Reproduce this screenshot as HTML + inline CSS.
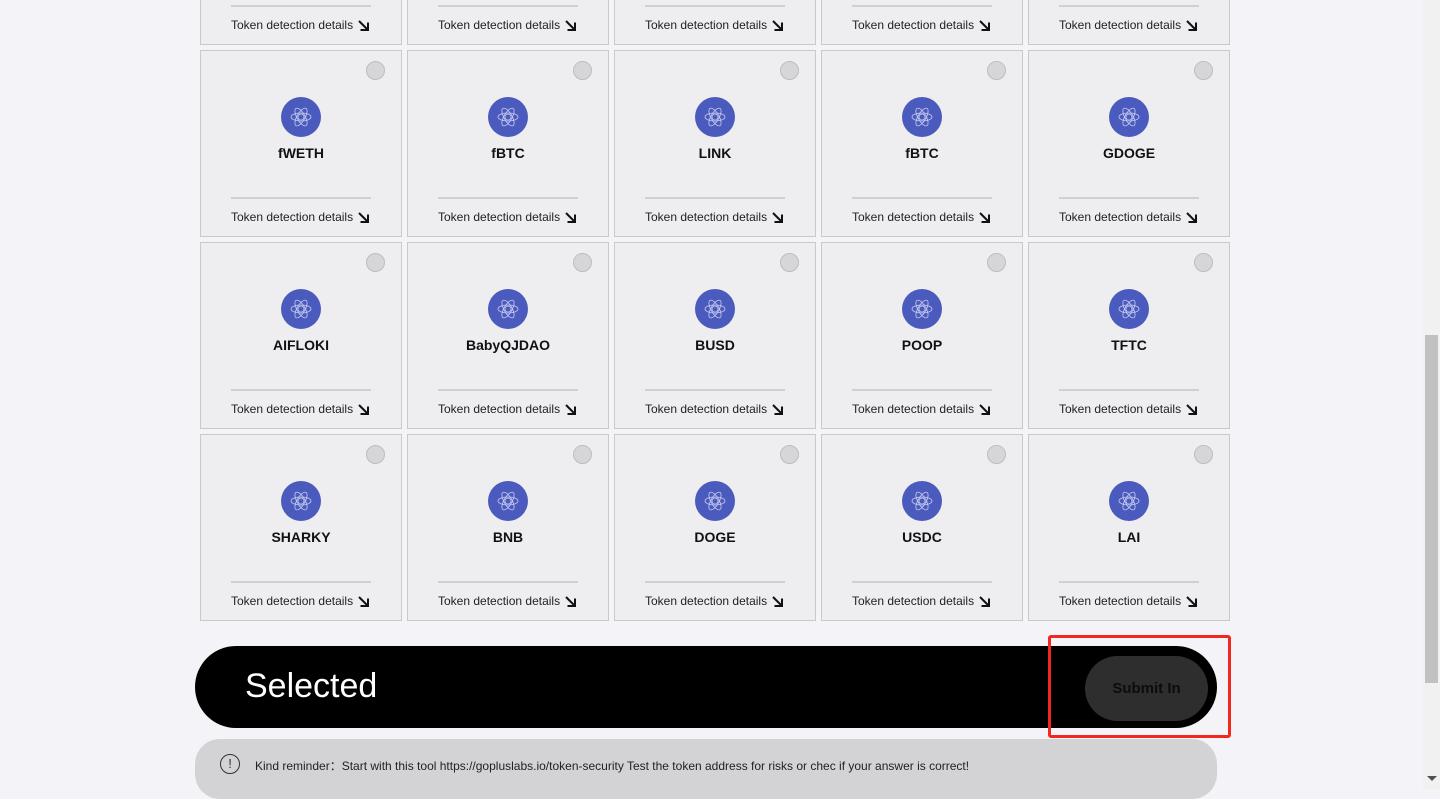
<!DOCTYPE html>
<html><head><meta charset="utf-8"><style>
*{margin:0;padding:0;box-sizing:border-box}
body{width:1440px;height:789px;overflow:hidden;background:#f4f4f8;font-family:"Liberation Sans",sans-serif;position:relative}
.card{position:absolute;width:202px;height:187px;background:#eeeef0;border:1px solid #c9c9cc}
.chk{position:absolute;left:165px;top:10px;width:19px;height:19px;border-radius:50%;background:#d6d6d8;border:1px solid #bdbdbf}
.ic{position:absolute;left:80px;top:46px;width:40px;height:40px;border-radius:50%;background:#4b5bbd}
.ic svg{position:absolute;left:8px;top:8px}
.nm{position:absolute;left:0;right:0;top:94px;text-align:center;font-weight:bold;font-size:14px;color:#111}
.ln{position:absolute;left:30px;width:140px;top:146px;height:2px;background:#d0d0d2}
.dt{position:absolute;left:30px;top:159px;font-size:12px;color:#222;white-space:nowrap}
.dt svg{vertical-align:-3px;margin-left:4px}
</style></head><body>
<div id="g"></div>
<div style="position:absolute;left:195px;top:646px;width:1022px;height:82px;border-radius:41px;background:#000"></div>
<div style="position:absolute;left:245px;top:667px;font-size:34px;color:#fff">Selected</div>
<div style="position:absolute;left:1085px;top:656px;width:123px;height:65px;border-radius:33px;background:#2e2e2e;text-align:center;line-height:65px;font-weight:bold;font-size:15px;color:#0c0c0c">Submit In</div>
<div style="position:absolute;left:1048px;top:635px;width:183px;height:103px;border:3px solid #f0281e;border-radius:3px"></div>
<div style="position:absolute;left:195px;top:739px;width:1022px;height:60px;border-radius:25px;background:#d3d3d5"></div>
<div style="position:absolute;left:220px;top:754px;width:20px;height:20px;border:1.5px solid #333;border-radius:50%;text-align:center;font-size:13px;line-height:17px;color:#333">!</div>
<div style="position:absolute;left:255px;top:757px;font-size:12px;color:#222;white-space:nowrap">Kind reminder：Start with this tool https://gopluslabs.io/token-security Test the token address for risks or chec if your answer is correct!</div>
<div style="position:absolute;left:1423px;top:0;width:17px;height:789px;background:#f1f1f1"></div>
<div style="position:absolute;left:1425px;top:335px;width:13px;height:348px;background:#c1c1c1"></div>
<div style="position:absolute;left:1427px;top:776px;border-left:5px solid transparent;border-right:5px solid transparent;border-top:5px solid #505050"></div>
<script>
var names=[["","","","",""],["fWETH","fBTC","LINK","fBTC","GDOGE"],["AIFLOKI","BabyQJDAO","BUSD","POOP","TFTC"],["SHARKY","BNB","DOGE","USDC","LAI"]];
var tops=[-142,50,242,434],h="";
var icon='<svg width="24" height="24" viewBox="0 0 24 24" fill="none" stroke="#c8ccf0" stroke-width="0.8"><ellipse cx="12" cy="12" rx="10" ry="4"/><ellipse cx="12" cy="12" rx="10" ry="4" transform="rotate(60 12 12)"/><ellipse cx="12" cy="12" rx="10" ry="4" transform="rotate(120 12 12)"/><circle cx="12" cy="12" r="3"/></svg>';
var arr='<svg width="13" height="13" viewBox="0 0 13 13" fill="none" stroke="#111" stroke-width="2"><path d="M2 2L11 11M3.5 11H11V3.5"/></svg>';
for(var r=0;r<4;r++)for(var c=0;c<5;c++){
h+='<div class="card" style="left:'+(200+c*207)+'px;top:'+tops[r]+'px"><div class="chk"></div><div class="ic">'+icon+'</div><div class="nm">'+names[r][c]+'</div><div class="ln"></div><div class="dt">Token detection details'+arr+'</div></div>';}
document.getElementById("g").innerHTML=h;
</script>
</body></html>
